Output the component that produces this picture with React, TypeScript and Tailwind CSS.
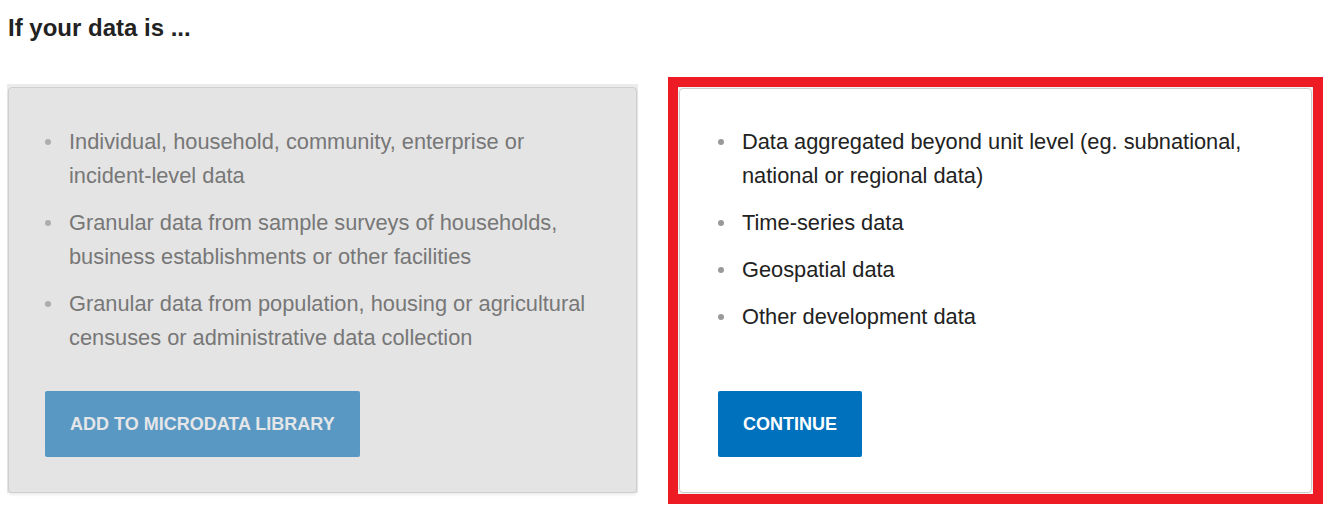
export default function App() {
  const unitItems = [
    'Individual, household, community, enterprise or incident-level data',
    'Granular data from sample surveys of households, business establishments or other facilities',
    'Granular data from population, housing or agricultural censuses or administrative data collection',
  ];
  const aggItems = [
    'Data aggregated beyond unit level (eg. subnational, national or regional data)',
    'Time-series data',
    'Geospatial data',
    'Other development data',
  ];

  return (
    <div className="w-[1330px] h-[512px] bg-white font-['Liberation_Sans',Arial,sans-serif] overflow-hidden">
      <h2 className="pt-[14px] pl-[8px] text-[24px] leading-[28px] font-bold text-[#222]">If your data is ...</h2>

      <div className="mt-[35px] flex items-stretch pl-[7px]">
        {/* Left: microdata (faded) */}
        <div className="w-[631px] mt-[7px] mb-[11px] bg-[#ebebeb] pt-[3px] pl-[1px] pr-[1px]">
          <div className="h-full flex flex-col bg-[#e4e4e4] border border-[#cfcfcf] rounded-[4px] shadow-[0_2px_3px_rgba(0,0,0,0.08)] px-[36px] pt-[37px] pb-[35px]">
            <ul className="flex flex-col gap-[13px]">
              {unitItems.map((t) => (
                <li key={t} className="flex items-start">
                  <span className="mt-[14px] w-[6px] h-[6px] rounded-full bg-[#adadad] shrink-0" />
                  <span className="ml-[18px] text-[21.8px] leading-[34px] text-[#777]">{t}</span>
                </li>
              ))}
            </ul>
            <div className="mt-auto pt-[36px]">
              <button className="h-[66px] px-[25px] bg-[#5a98c4] rounded-[2px] text-[18px] font-bold text-[#e4e6e8]">
                ADD TO MICRODATA LIBRARY
              </button>
            </div>
          </div>
        </div>

        {/* Right: development data, highlighted */}
        <div className="ml-[30px] w-[655px] border-[10px] border-[#ed1c24] p-[1px] bg-[#f2f2f2]">
          <div className="h-full flex flex-col bg-white border border-[#cccccc] rounded-[4px] pl-[38px] pr-[37px] pt-[36px] pb-[35px]">
            <ul className="flex flex-col gap-[13px]">
              {aggItems.map((t) => (
                <li key={t} className="flex items-start">
                  <span className="mt-[14px] w-[6px] h-[6px] rounded-full bg-[#999] shrink-0" />
                  <span className="ml-[18px] text-[21.8px] leading-[34px] text-[#222]">{t}</span>
                </li>
              ))}
            </ul>
            <div className="mt-auto">
              <button className="h-[66px] px-[25px] bg-[#0071bc] rounded-[2px] text-[18px] font-bold text-white">
                CONTINUE
              </button>
            </div>
          </div>
        </div>
      </div>
    </div>
  );
}
